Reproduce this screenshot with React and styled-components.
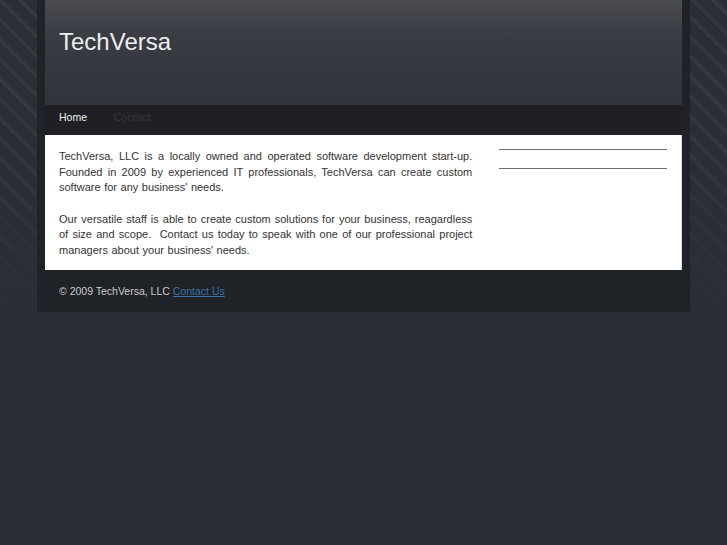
import React from 'react'
import styled, { createGlobalStyle } from 'styled-components'

const GlobalStyle = createGlobalStyle`
  html, body {
    margin: 0;
    padding: 0;
    background: #2a2e36;
    font-family: 'Liberation Sans', Arial, sans-serif;
  }
  body {
    min-height: 545px;
  }
`

const Page = styled.div`
  position: relative;
  min-height: 545px;
  background: #2a2e36;
  overflow: hidden;

  &::before {
    content: '';
    position: absolute;
    left: 0;
    top: 0;
    right: 0;
    height: 330px;
    background: repeating-linear-gradient(
      45deg,
      rgba(255, 255, 255, 0) 0px,
      rgba(255, 255, 255, 0) 7px,
      rgba(255, 255, 255, 0.045) 8px,
      rgba(255, 255, 255, 0.045) 11px,
      rgba(255, 255, 255, 0) 12px,
      rgba(255, 255, 255, 0) 14px
    );
    -webkit-mask-image: linear-gradient(to bottom, #000 0%, #000 40%, transparent 100%);
    mask-image: linear-gradient(to bottom, #000 0%, #000 40%, transparent 100%);
  }
`

const Wrapper = styled.div`
  position: relative;
  width: 637px;
  margin-left: 37px;
  padding: 0 8px;
  background: #1f2226;
`

const Header = styled.header`
  height: 105px;
  background: linear-gradient(to bottom, #4a4c51 0%, #393c43 35%, #30333b 100%);
`

const Title = styled.h1`
  margin: 0;
  padding: 29px 0 0 14px;
  font-size: 24px;
  font-weight: normal;
  color: #eeeeee;
  line-height: 26px;
`

const Nav = styled.nav`
  height: 30px;
  box-sizing: border-box;
  display: flex;
  align-items: flex-start;
  padding: 6px 0 0 14px;
  gap: 27px;
  background: #1e2025;
`

const NavLink = styled.a`
  font-size: 10.5px;
  line-height: 12px;
  color: ${(p) => (p.active ? '#f0f0f0' : '#33363b')};
  text-decoration: none;
`

const Content = styled.main`
  background: #ffffff;
  display: flex;
  padding: 14px 14px 12px 14px;
  gap: 27px;
  border-right: 1px solid #dddddd;
`

const MainCol = styled.div`
  width: 414px;
`

const Para = styled.p`
  margin: 0 0 16px;
  font-size: 11px;
  line-height: 15.5px;
  color: #333333;
  text-align: justify;
  word-spacing: 0.5px;

  &:last-child {
    margin-bottom: 0;
  }
`

const Sidebar = styled.aside`
  width: 168px;
`

const SideRule = styled.div`
  height: ${(p) => (p.first ? 0 : 18)}px;
  border-bottom: 1px solid #707070;
`

const Footer = styled.footer`
  height: 42px;
  padding: 15px 0 0 14px;
  box-sizing: border-box;
  font-size: 10.5px;
  color: #cccccc;
`

const FooterLink = styled.a`
  color: #3d73a6;
  text-decoration: underline;
`

export default function App() {
  return (
    <Page>
      <GlobalStyle />
      <Wrapper>
        <Header>
          <Title>TechVersa</Title>
        </Header>
        <Nav>
          <NavLink href="#" active>Home</NavLink>
          <NavLink href="#">Contact</NavLink>
        </Nav>
        <Content>
          <MainCol>
            <Para>
              TechVersa, LLC is a locally owned and operated software development start-up.
              Founded in 2009 by experienced IT professionals, TechVersa can create custom
              software for any business' needs.
            </Para>
            <Para>
              Our versatile staff is able to create custom solutions for your business, reagardless
              of size and scope.&nbsp; Contact us today to speak with one of our professional project
              managers about your business' needs.
            </Para>
          </MainCol>
          <Sidebar>
            <SideRule first />
            <SideRule />
          </Sidebar>
        </Content>
        <Footer>
          © 2009 TechVersa, LLC <FooterLink href="#">Contact Us</FooterLink>
        </Footer>
      </Wrapper>
    </Page>
  )
}
